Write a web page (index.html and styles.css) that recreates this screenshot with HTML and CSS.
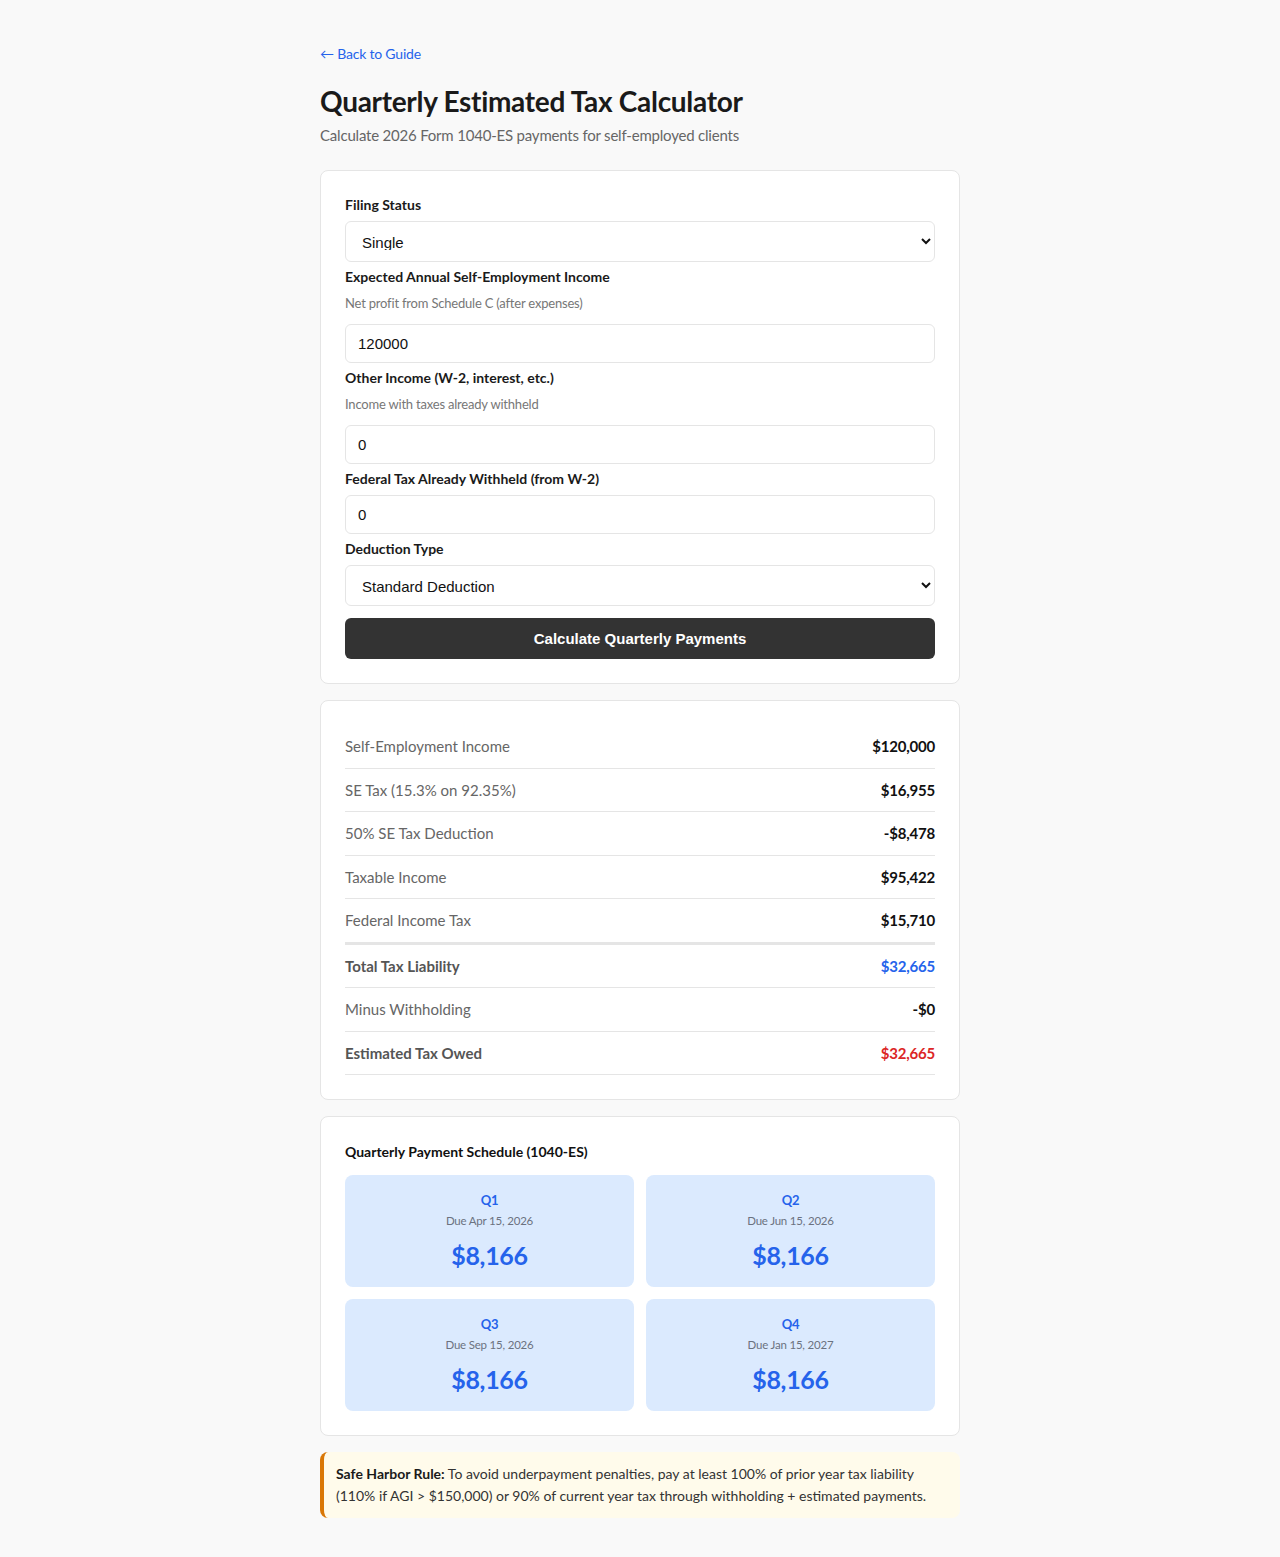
FILE: index.html
```html
<!DOCTYPE html>
<html lang="en">
<head>
<meta charset="utf-8">
<title>Quarterly Estimated Tax Calculator</title>
<link rel="stylesheet" href="styles.css">
</head>
<body>
<div class="container">
  <a class="back" href="#">← Back to Guide</a>
  <h1 class="title">Quarterly Estimated Tax Calculator</h1>
  <p class="subtitle">Calculate 2026 Form 1040-ES payments for self-employed clients</p>

  <div class="card form-card">
    <label class="label">Filing Status</label>
    <select class="field select">
      <option>Single</option>
      <option>Married Filing Jointly</option>
    </select>

    <label class="label gap">Expected Annual Self-Employment Income</label>
    <p class="hint">Net profit from Schedule C (after expenses)</p>
    <input class="field input" type="text" value="120000">

    <label class="label gap">Other Income (W-2, interest, etc.)</label>
    <p class="hint">Income with taxes already withheld</p>
    <input class="field input" type="text" value="0">

    <label class="label gap">Federal Tax Already Withheld (from W-2)</label>
    <input class="field input" type="text" value="0">

    <label class="label gap">Deduction Type</label>
    <select class="field select">
      <option>Standard Deduction</option>
      <option>Itemized Deduction</option>
    </select>

    <button class="btn" type="button">Calculate Quarterly Payments</button>
  </div>

  <div class="card results">
    <div class="row"><span class="r-label">Self-Employment Income</span><span class="r-value">$120,000</span></div>
    <div class="row"><span class="r-label">SE Tax (15.3% on 92.35%)</span><span class="r-value">$16,955</span></div>
    <div class="row"><span class="r-label">50% SE Tax Deduction</span><span class="r-value">-$8,478</span></div>
    <div class="row"><span class="r-label">Taxable Income</span><span class="r-value">$95,422</span></div>
    <div class="row"><span class="r-label">Federal Income Tax</span><span class="r-value">$15,710</span></div>
    <div class="row total"><span class="r-label strong">Total Tax Liability</span><span class="r-value blue">$32,665</span></div>
    <div class="row"><span class="r-label">Minus Withholding</span><span class="r-value">-$0</span></div>
    <div class="row"><span class="r-label strong">Estimated Tax Owed</span><span class="r-value red">$32,665</span></div>
  </div>

  <div class="card schedule">
    <h2 class="sched-title">Quarterly Payment Schedule (1040-ES)</h2>
    <div class="grid">
      <div class="q"><div class="q-name">Q1</div><div class="q-date">Due Apr 15, 2026</div><div class="q-amt">$8,166</div></div>
      <div class="q"><div class="q-name">Q2</div><div class="q-date">Due Jun 15, 2026</div><div class="q-amt">$8,166</div></div>
      <div class="q"><div class="q-name">Q3</div><div class="q-date">Due Sep 15, 2026</div><div class="q-amt">$8,166</div></div>
      <div class="q"><div class="q-name">Q4</div><div class="q-date">Due Jan 15, 2027</div><div class="q-amt">$8,166</div></div>
    </div>
  </div>

  <div class="note"><strong>Safe Harbor Rule:</strong> To avoid underpayment penalties, pay at least 100% of prior year tax liability (110% if AGI &gt; $150,000) or 90% of current year tax through withholding + estimated payments.</div>
</div>
</body>
</html>
```

FILE: styles.css
```css
* { box-sizing: border-box; }

body {
  margin: 0;
  background: #f9f9f9;
  font-family: "Lato", "Noto Sans", sans-serif;
  letter-spacing: -0.2px;
  color: #1a1a1a;
}

.container {
  width: 640px;
  margin: 0 auto;
  padding: 44px 0 40px;
}

.back {
  display: block;
  font-size: 14px;
  line-height: 20px;
  color: #2563eb;
  text-decoration: none;
  margin-bottom: 20px;
}

.title {
  margin: 0 0 7px;
  font-size: 28px;
  line-height: 34px;
  font-weight: 700;
  letter-spacing: -0.3px;
  color: #1a1a1a;
}

.subtitle {
  margin: 0 0 25px;
  font-size: 15px;
  line-height: 20px;
  color: #666;
}

.card {
  background: #fff;
  border: 1px solid #e5e5e5;
  border-radius: 8px;
  padding: 24px;
  margin-bottom: 16px;
}

.form-card {
  display: flex;
  flex-direction: column;
  padding-top: 23px;
}

.label {
  display: block;
  font-size: 14px;
  line-height: 21px;
  font-weight: 700;
  letter-spacing: normal;
  color: #1a1a1a;
  margin-bottom: 6px;
}

.label.gap { margin-top: 4px; }

.hint {
  margin: 2px 0 13px;
  font-size: 13px;
  line-height: 16px;
  color: #777;
}

.field {
  width: 100%;
  border: 1px solid #e5e5e5;
  border-radius: 6px;
  background: #fff;
  font-family: "Liberation Sans", Arial, sans-serif;
  font-size: 15px;
  letter-spacing: normal;
  color: #111;
}

.select {
  padding: 11px 8px 11px 12px;
  height: 41px;
}

.input {
  padding: 10px 12px;
  height: 39px;
}

.btn {
  margin-top: 12px;
  height: 41px;
  width: 100%;
  border: none;
  border-radius: 6px;
  background: #333;
  color: #fff;
  font-family: "Liberation Sans", Arial, sans-serif;
  font-size: 15px;
  font-weight: 700;
  letter-spacing: normal;
}

.results { padding-top: 24px; padding-bottom: 24px; }

.row {
  display: flex;
  justify-content: space-between;
  align-items: center;
  padding: 12px 0;
  line-height: 18.5px;
  font-size: 15px;
  letter-spacing: normal;
  border-bottom: 1px solid #e5e5e5;
}

.row.total { border-top: 2px solid #e5e5e5; }

.r-label { color: #666; }
.r-label.strong { font-weight: 700; color: #555; }

.r-value { font-weight: 700; color: #111; letter-spacing: -0.2px; }
.r-value.blue { color: #2563eb; }
.r-value.red { color: #dc2626; }

.sched-title {
  margin: 0 0 13px;
  font-size: 14px;
  line-height: 21px;
  font-weight: 700;
  letter-spacing: normal;
  color: #111;
}

.grid {
  display: grid;
  grid-template-columns: 1fr 1fr;
  gap: 12px;
}

.q {
  background: #dbeafe;
  border-radius: 8px;
  padding: 16px;
  text-align: center;
}

.q-name {
  font-size: 13px;
  line-height: 18px;
  font-weight: 700;
  color: #2563eb;
}

.q-date {
  margin-top: 4px;
  font-size: 11.5px;
  line-height: 16px;
  color: #6b7280;
}

.q-amt {
  margin-top: 11px;
  font-size: 25px;
  line-height: 31px;
  font-weight: 700;
  letter-spacing: -0.3px;
  color: #2563eb;
}

.note {
  background: #fffbeb;
  border-left: 4px solid #d97706;
  border-radius: 8px;
  padding: 11px 24px 11px 12px;
  font-size: 14px;
  line-height: 22px;
  letter-spacing: normal;
  color: #333;
}

.note strong { color: #1a1a1a; }
```
